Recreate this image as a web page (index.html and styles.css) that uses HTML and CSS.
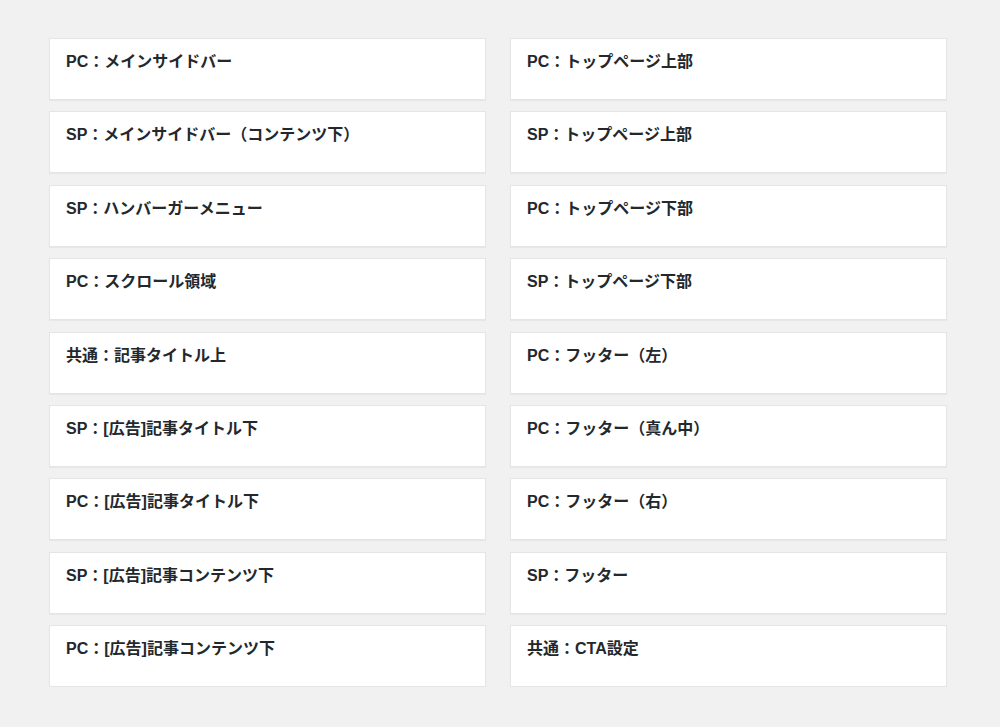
FILE: index.html
```html
<!DOCTYPE html>
<html lang="ja">
<head>
    <meta charset="UTF-8">
    <meta name="viewport" content="width=device-width, initial-scale=1.0">
    <title>ウィジェット</title>
    <link rel="stylesheet" href="styles.css">
</head>
<body>
    <div class="widget-areas">
        <div class="widget-col">
            <div class="widget-box"><h3 class="widget-title">PC：メインサイドバー</h3></div>
            <div class="widget-box"><h3 class="widget-title">SP：メインサイドバー（コンテンツ下）</h3></div>
            <div class="widget-box"><h3 class="widget-title">SP：ハンバーガーメニュー</h3></div>
            <div class="widget-box"><h3 class="widget-title">PC：スクロール領域</h3></div>
            <div class="widget-box"><h3 class="widget-title">共通：記事タイトル上</h3></div>
            <div class="widget-box"><h3 class="widget-title">SP：[広告]記事タイトル下</h3></div>
            <div class="widget-box"><h3 class="widget-title">PC：[広告]記事タイトル下</h3></div>
            <div class="widget-box"><h3 class="widget-title">SP：[広告]記事コンテンツ下</h3></div>
            <div class="widget-box"><h3 class="widget-title">PC：[広告]記事コンテンツ下</h3></div>
        </div>
        <div class="widget-col">
            <div class="widget-box"><h3 class="widget-title">PC：トップページ上部</h3></div>
            <div class="widget-box"><h3 class="widget-title">SP：トップページ上部</h3></div>
            <div class="widget-box"><h3 class="widget-title">PC：トップページ下部</h3></div>
            <div class="widget-box"><h3 class="widget-title">SP：トップページ下部</h3></div>
            <div class="widget-box"><h3 class="widget-title">PC：フッター（左）</h3></div>
            <div class="widget-box"><h3 class="widget-title">PC：フッター（真ん中）</h3></div>
            <div class="widget-box"><h3 class="widget-title">PC：フッター（右）</h3></div>
            <div class="widget-box"><h3 class="widget-title">SP：フッター</h3></div>
            <div class="widget-box"><h3 class="widget-title">共通：CTA設定</h3></div>
        </div>
    </div>
</body>
</html>
```

FILE: styles.css
```css
/* ページ全体 */
body {
    margin: 0;
    background-color: #f1f1f1;
    font-family: "Liberation Sans", "Noto Sans CJK JP", sans-serif;
    color: #23282d;
}

/* ウィジェットエリアの2カラム */
.widget-areas {
    display: grid;
    grid-template-columns: 437px 437px;
    column-gap: 24px;
    padding: 38px 0 0 49px;
}

.widget-col {
    display: flex;
    flex-direction: column;
    gap: 11.4px;
}

/* 各ウィジェットの箱 */
.widget-box {
    height: 62px;
    box-sizing: border-box;
    background-color: #fff;
    border: 1px solid #e5e5e5;
    box-shadow: 0 1px 1px rgba(0, 0, 0, 0.04);
}

.widget-title {
    margin: 0;
    padding: 12px 16px;
    font-size: 16px;
    font-weight: bold;
    line-height: 22px;
}
```
